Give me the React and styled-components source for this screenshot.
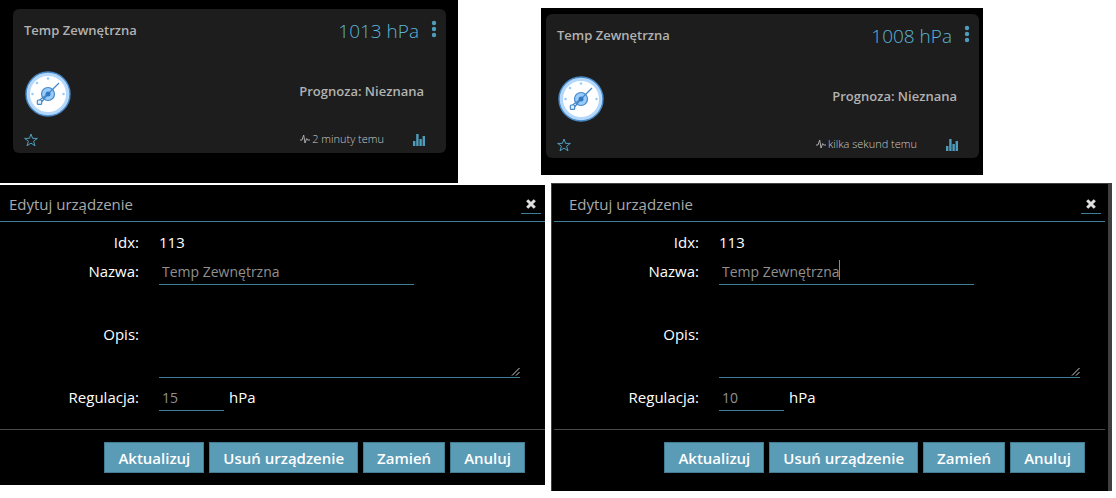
import React, { useId } from "react";
import styled, { createGlobalStyle } from "styled-components";

const GlobalStyle = createGlobalStyle`
  * { box-sizing: border-box; }
  body {
    margin: 0;
    background: #fff;
    font-family: "Open Sans", "Noto Sans", sans-serif;
  }
`;

const Page = styled.main`
  padding-right: 4px;
`;

const CardRow = styled.div`
  display: grid;
  grid-template-columns: 458fr 83fr 442fr 129fr;
  align-items: start;
`;

const Stage = styled.section`
  grid-column: ${(p) => (p.$offset ? 3 : 1)};
  background: #000;
  margin-top: ${(p) => (p.$offset ? "8px" : "0")};
  padding: ${(p) => (p.$offset ? "6px 4px 17px 5px" : "9px 12px 30px 13px")};
`;

const Card = styled.article`
  display: flex;
  flex-direction: column;
  padding: 8px 8px 3px 11px;
  border-radius: 6px;
  background: #1d1d1d;
  color: #b2b2b2;
`;

const CardTop = styled.header`
  display: flex;
  align-items: center;
  height: 28px;
`;

const CardTitle = styled.h2`
  flex: 1;
  margin: 0;
  padding-bottom: 2px;
  font-size: 13px;
  line-height: 26px;
  font-weight: 600;
`;

const Reading = styled.span`
  margin-right: 11px;
  color: #5cb4d8;
  font-size: 19px;
  line-height: 28px;
  font-weight: 300;
`;

const IconButton = styled.button`
  display: flex;
  align-items: center;
  justify-content: center;
  padding: 0;
  border: 0;
  background: none;
  color: #4f9dbd;
  cursor: pointer;
`;

const MenuButton = styled(IconButton)`
  width: 8px;
  height: 28px;
  align-items: flex-start;
  padding-top: 3px;
`;

const CardMiddle = styled.div`
  display: flex;
  align-items: center;
  justify-content: space-between;
  height: 48px;
  margin-top: 25px;
  padding-right: 14px;
`;

const Forecast = styled.span`
  font-size: 13px;
  line-height: 20px;
  font-weight: 600;
  padding-bottom: 6px;
`;

const CardBottom = styled.footer`
  display: flex;
  align-items: center;
  height: 20px;
  margin-top: 12px;
  padding-right: 13px;
`;

const Updated = styled.span`
  display: flex;
  align-items: center;
  gap: 2px;
  margin-left: auto;
  margin-right: 29px;
  padding-bottom: 2px;
  color: #c8c8c8;
  font-size: 11px;
  line-height: 18px;
  font-weight: 300;
`;

const DialogRow = styled.div`
  display: grid;
  grid-template-columns: 545fr 561fr;
  column-gap: 6px;
  align-items: start;
`;

const Dialog = styled.section`
  --inset: ${(p) => (p.$framed ? "6px" : "0px")};
  margin-top: ${(p) => (p.$framed ? "0" : "2px")};
  padding: ${(p) => (p.$framed ? "1px 3px 6px 2px" : "0")};
  border: 0 solid #3e4040;
  border-width: ${(p) => (p.$framed ? "1px 4px 0 1px" : "0")};
  background: #000;
  color: #fff;
  font-size: 15px;
  line-height: 20px;
`;

const DialogHeader = styled.header`
  display: flex;
  align-items: center;
  justify-content: space-between;
  height: 37px;
  padding: 0 4px 0 calc(9px + var(--inset));
  border-bottom: 1px solid #3e7d96;
`;

const DialogTitle = styled.h1`
  margin: 0;
  padding-top: 2px;
  color: #aaa;
  font-size: 15px;
  line-height: 20px;
  font-weight: 400;
`;

const CloseButton = styled(IconButton)`
  width: 20px;
  height: 20px;
  margin-top: 2px;
  border-bottom: 1px solid #3e7d96;
  color: #ddd;
`;

const Form = styled.form`
  margin: 0;
`;

const Fields = styled.div`
  display: grid;
  grid-template-columns: calc(139px + var(--inset)) minmax(0, 1fr);
  column-gap: 20px;
  padding: 8px 25px 16px 0;
`;

const Label = styled.label`
  align-self: center;
  text-align: right;
`;

const Value = styled.div`
  display: flex;
  align-items: center;
  position: relative;
  height: ${(p) => p.$height}px;
`;

const IdxValue = styled.output`
  display: block;
`;

const TextInput = styled.input`
  width: ${(p) => p.$width};
  height: 28px;
  padding: 2px 0 0 3px;
  border: 0;
  border-bottom: 1px solid #3e7d96;
  outline: 0;
  background: transparent;
  color: #909090;
  font: 400 14px/20px "Open Sans", "Noto Sans", sans-serif;
`;

const Caret = styled.span`
  position: absolute;
  left: 120px;
  top: 6px;
  width: 1px;
  height: 20px;
  background: #888;
`;

const TextArea = styled.textarea`
  width: 100%;
  height: 89px;
  padding: 4px;
  border: 0;
  border-bottom: 1px solid #3e7d96;
  outline: 0;
  background: transparent;
  color: #909090;
  resize: none;
  font: 400 14px/20px "Open Sans", "Noto Sans", sans-serif;
`;

const Grip = styled.svg`
  position: absolute;
  right: 0;
  bottom: 4px;
`;

const Unit = styled.span`
  margin-left: 5px;
`;

const Actions = styled.div`
  display: flex;
  justify-content: flex-end;
  gap: 5px;
  padding: 12px 20px;
  border-top: 1px solid #4a4a4a;
`;

const ActionButton = styled.button`
  height: 31px;
  padding: 0 13px;
  border: 1px solid #447c94;
  background: #5a9bb6;
  color: #fff;
  font: 600 15px/20px "Open Sans", "Noto Sans", sans-serif;
  cursor: pointer;
`;

const Gauge = () => (
  <svg width="48" height="48" viewBox="0 0 48 48" role="img" aria-label="Barometr">
    <circle cx="24" cy="24" r="22" fill="#b3d8fb" stroke="#4788c7" strokeWidth="1.4" />
    <circle cx="24" cy="24" r="18" fill="#fff" />
    <g fill="#98ccfd">
      <circle cx="24" cy="8.5" r="1.3" />
      <circle cx="13" cy="13" r="1.3" />
      <circle cx="8.5" cy="24" r="1.3" />
      <circle cx="39.5" cy="24" r="1.3" />
    </g>
    <circle cx="24" cy="24" r="6.5" fill="#98ccfd" stroke="#4788c7" strokeWidth="1.2" />
    <path d="M35 13 24 24 18 31.500M24 24 15.500 30" fill="none" stroke="#4788c7" strokeWidth="1.3" />
    <rect x="13.3" y="30" width="4.4" height="4.4" rx="1" fill="#dff0fe" stroke="#4788c7" strokeWidth="1.2" />
    <circle cx="24" cy="24" r="2.5" fill="#3478bd" />
  </svg>
);

const Dots = () => (
  <svg width="6" height="18" viewBox="0 0 6 18" fill="currentColor" aria-hidden="true">
    <circle cx="3" cy="3" r="2.2" />
    <circle cx="3" cy="9" r="2.2" />
    <circle cx="3" cy="15" r="2.2" />
  </svg>
);

const Star = () => (
  <svg width="14" height="14" viewBox="0 0 14 14" fill="none" stroke="currentColor" aria-hidden="true">
    <path d="M7 1 8.600 5.400H13.400L9.600 8.200 11 12.800 7 10.100 3 12.800 4.400 8.200.6 5.400H5.400Z" />
  </svg>
);

const Pulse = () => (
  <svg width="10" height="10" viewBox="0 0 10 10" fill="none" stroke="#aaa" aria-hidden="true">
    <path d="M0 6H2L3.700 1 5 9 6.700 4.500 7.600 6H10" />
  </svg>
);

const Bars = () => (
  <svg width="12" height="12" viewBox="0 0 12 12" fill="currentColor" aria-hidden="true">
    <path d="M0 7h2.400v5H0zM3.200 0h2.400v12H3.200zM6.400 5h2.400v7H6.400zM9.600 2H12v10H9.600z" />
  </svg>
);

const Cross = () => (
  <svg width="10" height="10" viewBox="0 0 10 10" stroke="currentColor" strokeWidth="3" aria-hidden="true">
    <path d="M1.200 1.200 8.800 8.800M8.800 1.200 1.200 8.800" />
  </svg>
);

function SensorCard({ value, updated }) {
  return (
    <Card>
      <CardTop>
        <CardTitle>Temp Zewnętrzna</CardTitle>
        <Reading>{value}</Reading>
        <MenuButton type="button" aria-label="Menu"><Dots /></MenuButton>
      </CardTop>
      <CardMiddle>
        <Gauge />
        <Forecast>Prognoza: Nieznana</Forecast>
      </CardMiddle>
      <CardBottom>
        <IconButton type="button" aria-label="Ulubione"><Star /></IconButton>
        <Updated><Pulse />{updated}</Updated>
        <IconButton type="button" aria-label="Wykres"><Bars /></IconButton>
      </CardBottom>
    </Card>
  );
}

function EditDialog({ framed, adjustment, focused }) {
  const id = useId();
  return (
    <Dialog $framed={framed}>
      <DialogHeader>
        <DialogTitle>Edytuj urządzenie</DialogTitle>
        <CloseButton type="button" aria-label="Zamknij"><Cross /></CloseButton>
      </DialogHeader>
      <Form onSubmit={(e) => e.preventDefault()}>
        <Fields>
          <Label htmlFor={id + "idx"}>Idx:</Label>
          <Value $height={24}><IdxValue id={id + "idx"}>113</IdxValue></Value>
          <Label htmlFor={id + "name"}>Nazwa:</Label>
          <Value $height={33}>
            <TextInput id={id + "name"} $width="255px" defaultValue="Temp Zewnętrzna" />
            {focused && <Caret />}
          </Value>
          <Label htmlFor={id + "desc"}>Opis:</Label>
          <Value $height={93}>
            <TextArea id={id + "desc"} />
            <Grip width="9" height="8" viewBox="0 0 9 8" stroke="#ccc" aria-hidden="true">
              <path d="M1 7.500 8.500 0M5 7.500 8.500 4" />
            </Grip>
          </Value>
          <Label htmlFor={id + "adj"}>Regulacja:</Label>
          <Value $height={33}>
            <TextInput id={id + "adj"} $width="65px" defaultValue={adjustment} />
            <Unit>hPa</Unit>
          </Value>
        </Fields>
        <Actions>
          <ActionButton type="submit">Aktualizuj</ActionButton>
          <ActionButton type="button">Usuń urządzenie</ActionButton>
          <ActionButton type="button">Zamień</ActionButton>
          <ActionButton type="button">Anuluj</ActionButton>
        </Actions>
      </Form>
    </Dialog>
  );
}

export default function App() {
  return (
    <>
      <GlobalStyle />
      <Page>
        <CardRow>
          <Stage><SensorCard value="1013 hPa" updated="2 minuty temu" /></Stage>
          <Stage $offset><SensorCard value="1008 hPa" updated="kilka sekund temu" /></Stage>
        </CardRow>
        <DialogRow>
          <EditDialog adjustment="15" />
          <EditDialog framed focused adjustment="10" />
        </DialogRow>
      </Page>
    </>
  );
}
